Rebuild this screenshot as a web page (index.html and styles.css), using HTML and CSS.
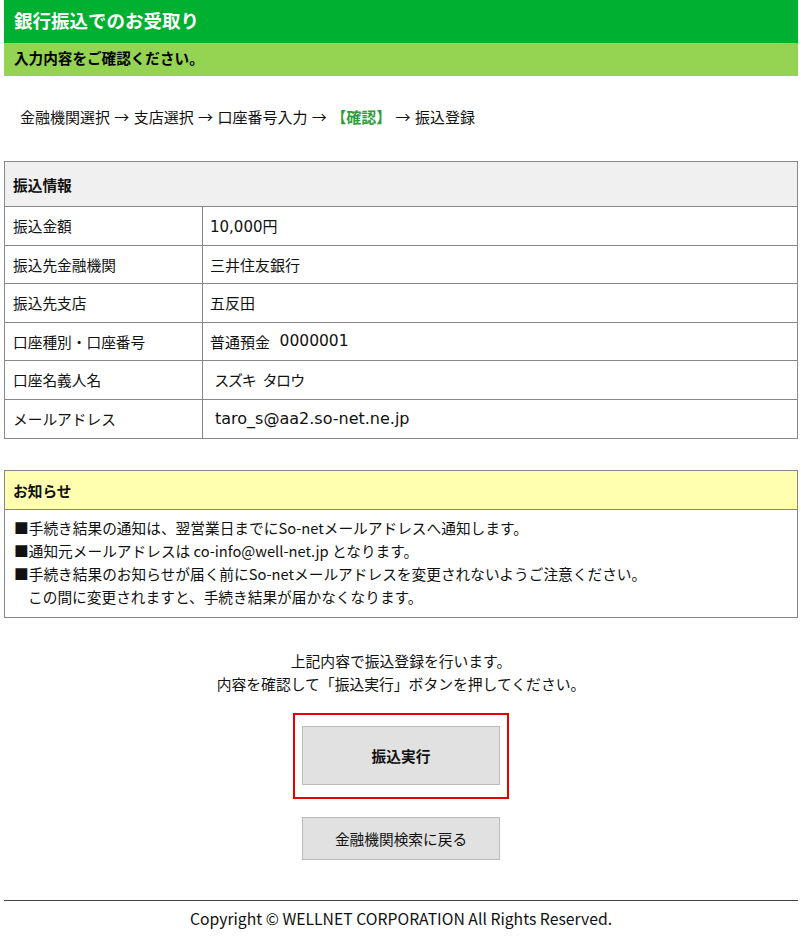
FILE: index.html
```html
<!DOCTYPE html>
<html lang="ja">
<head>
<meta charset="utf-8">
<title>銀行振込でのお受取り</title>
<link rel="stylesheet" href="styles.css">
</head>
<body>
<header class="page-head">
  <h1 class="title">銀行振込でのお受取り</h1>
  <p class="subtitle">入力内容をご確認ください。</p>
</header>

<p class="steps">金融機関選択 → 支店選択 → 口座番号入力 → <span class="current">【確認】</span> → 振込登録</p>

<section class="info">
  <div class="info-head">振込情報</div>
  <div class="row"><div class="label">振込金額</div><div class="value">10,000円</div></div>
  <div class="row"><div class="label">振込先金融機関</div><div class="value">三井住友銀行</div></div>
  <div class="row"><div class="label">振込先支店</div><div class="value">五反田</div></div>
  <div class="row"><div class="label">口座種別・口座番号</div><div class="value">普通預金&nbsp;&nbsp;<span class="num">0000001</span></div></div>
  <div class="row"><div class="label">口座名義人名</div><div class="value indent name">スズキ&nbsp;&nbsp;タロウ</div></div>
  <div class="row"><div class="label">メールアドレス</div><div class="value indent email">taro_s@aa2.so-net.ne.jp</div></div>
</section>

<section class="notice">
  <div class="notice-head">お知らせ</div>
  <div class="notice-body">
    <p>■手続き結果の通知は、翌営業日までにSo-netメールアドレスへ通知します。</p>
    <p>■通知元メールアドレスは co-info@well-net.jp となります。</p>
    <p>■手続き結果のお知らせが届く前にSo-netメールアドレスを変更されないようご注意ください。</p>
    <p class="cont">この間に変更されますと、手続き結果が届かなくなります。</p>
  </div>
</section>

<div class="confirm">
  <p class="confirm-text">上記内容で振込登録を行います。<br>内容を確認して「振込実行」ボタンを押してください。</p>
  <div class="highlight">
    <button class="btn btn-main" type="button">振込実行</button>
  </div>
  <button class="btn btn-back" type="button">金融機関検索に戻る</button>
</div>

<footer class="footer">Copyright © WELLNET CORPORATION All Rights Reserved.</footer>
</body>
</html>
```

FILE: styles.css
```css
* { box-sizing: border-box; }

html, body {
  margin: 0;
  padding: 0;
  background: #fff;
}

body {
  padding: 0 3px 0 4px;
  font-family: "Noto Sans CJK JP", "Noto Sans", sans-serif;
  font-size: 14.7px;
  color: #111;
}

p { margin: 0; }

.title {
  margin: 0;
  height: 43px;
  background: #00b030;
  color: #fff;
  font-size: 18.5px;
  font-weight: bold;
  line-height: 40px;
  padding-left: 10px;
}

.subtitle {
  height: 33px;
  background: #95d352;
  color: #000;
  font-size: 14.6px;
  font-weight: bold;
  line-height: 30px;
  padding-left: 10px;
}

.steps {
  margin: 30px 0 0;
  padding-left: 16px;
  line-height: 22px;
  font-size: 15px;
  word-spacing: 1px;
}

.steps .current {
  color: #2e9e3a;
  font-weight: bold;
}

.info {
  margin-top: 33px;
  border: 1px solid #888;
}

.info-head {
  height: 45px;
  background: #f0f0f0;
  border-bottom: 1px solid #888;
  font-weight: bold;
  display: flex;
  align-items: center;
  padding-left: 8px;
}

.row {
  display: grid;
  grid-template-columns: 198px 1fr;
  height: 38.5px;
  border-bottom: 1px solid #888;
}

.row:last-child { border-bottom: none; }

.label {
  border-right: 1px solid #888;
  display: flex;
  align-items: center;
  padding-left: 8px;
}

.value {
  display: flex;
  align-items: center;
  padding-left: 7px;
  font-family: "DejaVu Sans", "Noto Sans CJK JP", sans-serif;
  font-size: 15px;
  white-space: pre;
}

.value .num { font-size: 15.5px; }

.value.indent { padding-left: 12px; }

.value.email { font-size: 16px; }

.value.name {
  font-family: "Noto Sans CJK JP", sans-serif;
  font-feature-settings: "palt";
}

.notice {
  margin-top: 31px;
  border: 1px solid #888;
}

.notice-head {
  height: 39px;
  background: #ffffaf;
  border-bottom: 1px solid #888;
  font-weight: bold;
  display: flex;
  align-items: center;
  padding-left: 8px;
}

.notice-body {
  padding: 6px 8px 9px 9px;
  line-height: 23px;
}

.notice-body .cont { padding-left: 14px; }

.confirm {
  display: flex;
  flex-direction: column;
  align-items: center;
}

.confirm-text {
  margin-top: 31px;
  text-align: center;
  line-height: 23px;
  font-size: 14.8px;
}

.highlight {
  margin-top: 18px;
  border: 2px solid #e60000;
  padding: 11px 7px 12px;
}

.btn {
  display: block;
  width: 198px;
  background: #e1e1e1;
  border: 1px solid #bbb;
  color: #111;
  font-family: inherit;
  font-size: 14.7px;
  padding: 0;
  cursor: pointer;
}

.btn-main {
  height: 59px;
  font-weight: bold;
}

.btn-back {
  margin-top: 18px;
  height: 43px;
}

.footer {
  margin-top: 40px;
  border-top: 1px solid #444;
  text-align: center;
  font-size: 15.75px;
  line-height: 20px;
  padding-top: 8px;
  padding-bottom: 14px;
}
```
